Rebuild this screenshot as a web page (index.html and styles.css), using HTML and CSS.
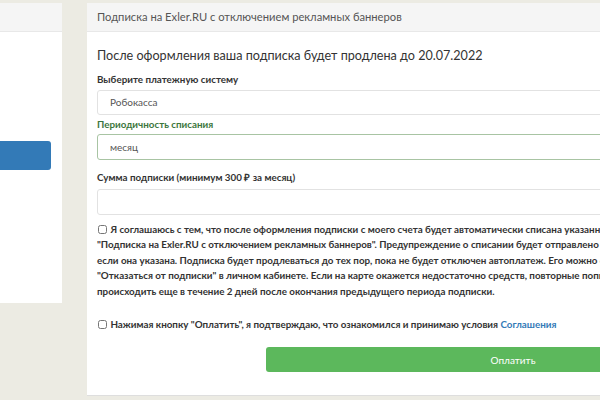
FILE: index.html
```html
<!DOCTYPE html>
<html lang="ru">
<head>
  <meta charset="UTF-8" />
  <title>Подписка на Exler.RU</title>
  <link rel="stylesheet" href="styles.css">
</head>
<body>
  <div class="side">
    <div class="side-panel">
      <div class="side-head"></div>
      <div class="side-body">
        <div class="side-btn"></div>
      </div>
    </div>
  </div>

  <div class="panel">
    <div class="panel-head">Подписка на Exler.RU с отключением рекламных баннеров</div>
    <div class="panel-body">
      <h2 class="title">После оформления ваша подписка будет продлена до 20.07.2022</h2>

      <label class="field-label">Выберите платежную систему</label>
      <div class="field">Робокасса</div>

      <label class="field-label ok">Периодичность списания</label>
      <div class="field field-ok">месяц</div>

      <label class="field-label sum">Сумма подписки (минимум 300 ₽ за месяц)</label>
      <div class="field field-sum"></div>

      <p class="agree"><input type="checkbox" class="check"> Я соглашаюсь с тем, что после оформления подписки с моего счета будет автоматически списана указанная сумма<br>"Подписка на Exler.RU с отключением рекламных баннеров". Предупреждение о списании будет отправлено на почту,<br>если она указана. Подписка будет продлеваться до тех пор, пока не будет отключен автоплатеж. Его можно отключить<br>"Отказаться от подписки" в личном кабинете. Если на карте окажется недостаточно средств, повторные попытки списания<br>происходить еще в течение 2 дней после окончания предыдущего периода подписки.</p>

      <p class="agree confirm"><input type="checkbox" class="check"> Нажимая кнопку "Оплатить", я подтверждаю, что ознакомился и принимаю условия <a href="#" class="link">Соглашения</a></p>

      <div class="actions">
        <button class="pay-btn">Оплатить</button>
      </div>
    </div>
  </div>
</body>
</html>
```

FILE: styles.css
```css
* {
  box-sizing: border-box;
  margin: 0;
  padding: 0;
}

html, body {
  height: 100%;
  overflow: hidden;
}

body {
  background: #ecebe3;
  font-family: Lato, "Open Sans", sans-serif;
  color: #333;
  display: flex;
  align-items: flex-start;
  padding-top: 3px;
}

/* left column */
.side {
  width: 62px;
  flex-shrink: 0;
}

.side-panel {
  background: white;
  height: 300px;
}

.side-head {
  height: 29px;
  background: #f5f5f5;
  border-bottom: 1px solid #e8e8e8;
}

.side-body {
  padding: 109px 11px 0 0;
}

.side-btn {
  height: 29px;
  background: #337ab7;
  border-radius: 0 3px 3px 0;
}

/* main panel */
.panel {
  margin-left: 25px;
  width: 700px;
  flex-shrink: 0;
  background: white;
  border-bottom: 1px solid #dedede;
}

.panel-head {
  height: 29px;
  background: #f5f5f5;
  border-bottom: 1px solid #e8e8e8;
  padding: 0 10px;
  font-size: 11.2px;
  line-height: 28px;
  color: #555;
}

.panel-body {
  padding: 14px 10px 23px 10px;
}

.title {
  font-size: 12.6px;
  font-weight: normal;
  line-height: 20px;
  margin-bottom: 6px;
}

.field-label {
  display: block;
  font-size: 9.8px;
  font-weight: bold;
  line-height: 14px;
  margin-bottom: 4px;
}

.field-label.ok {
  color: #3c763d;
  margin-top: 2px;
  margin-bottom: 3px;
}

.field-label.sum {
  margin-top: 10px;
  margin-bottom: 5px;
}

.field {
  height: 25px;
  border: 1px solid #e2e2e2;
  border-radius: 3px;
  padding: 0 12px;
  font-size: 10px;
  line-height: 23px;
  color: #555;
}

.field-ok {
  height: 26px;
  line-height: 24px;
  border-color: #a8c4a3;
}

.field-sum {
  height: 26px;
}

.agree {
  font-size: 9.8px;
  font-weight: bold;
  line-height: 15.4px;
  white-space: nowrap;
  margin-top: 7px;
}

.agree.confirm {
  margin-top: 18px;
}

.check {
  width: 9px;
  height: 9px;
  margin: 0 1px 0 1px;
  vertical-align: -1px;
}

.link {
  color: #337ab7;
  text-decoration: none;
}

.actions {
  padding: 15px 0 0 169px;
}

.pay-btn {
  display: block;
  width: 494px;
  height: 25px;
  border: none;
  border-radius: 3px;
  background: #5cb85c;
  color: white;
  font-family: inherit;
  font-size: 10px;
}
```
